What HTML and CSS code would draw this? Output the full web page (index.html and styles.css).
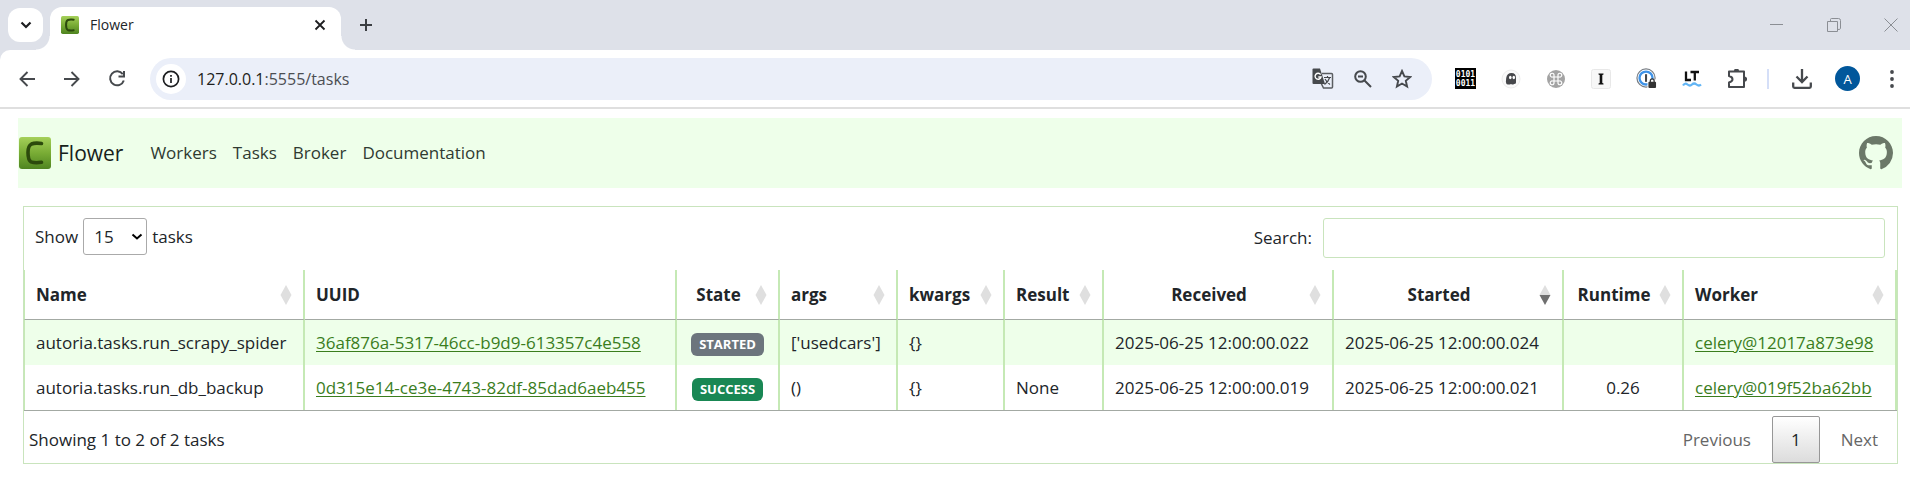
FILE: index.html
```html
<!DOCTYPE html>
<html lang="en">
<head>
<meta charset="utf-8">
<title>Flower</title>
<link rel="stylesheet" href="styles.css">
</head>
<body>
<svg class="defs" aria-hidden="true">
  <defs>
    <linearGradient id="leaf" x1="0" y1="0" x2="0" y2="1">
      <stop offset="0" stop-color="#a5d05a"/>
      <stop offset=".5" stop-color="#79ac35"/>
      <stop offset="1" stop-color="#4f8420"/>
    </linearGradient>
    <symbol id="celery" viewBox="0 0 32 32">
      <rect x="0" y="0" width="32" height="32" rx="3" fill="url(#leaf)"/>
      <path d="M22.500 6.500C19 6 15 6 12.500 7C9.500 8.500 9 11 9 15.500C9 20.500 9.500 23.500 12 24.800C15 26 19 25.800 22.500 25.300" fill="none" stroke="#2c4a0c" stroke-width="3.600" stroke-linecap="round"/>
    </symbol>
    <symbol id="sort" viewBox="0 0 12 20">
      <path class="up" d="M6 0L11.500 10H.5z"/>
      <path class="down" d="M.5 10H11.500L6 20z"/>
    </symbol>
  </defs>
</svg>

<header class="browser">
  <div class="tabstrip">
    <button class="tab-search" aria-label="Search tabs"><svg width="12" height="8" viewBox="0 0 12 8"><path d="M1.500 1.500L6 6L10.500 1.500" fill="none" stroke="#1d1e20" stroke-width="2.200"/></svg></button>
    <div class="tab">
      <svg class="favicon" width="18" height="18"><use href="#celery"/></svg>
      <span class="tab-title">Flower</span>
      <button class="plain" aria-label="Close tab"><svg width="12" height="12" viewBox="0 0 12 12"><path d="M1.500 1.500L10.500 10.500M10.500 1.500L1.500 10.500" stroke="#1d1e20" stroke-width="1.800"/></svg></button>
    </div>
    <button class="plain new-tab" aria-label="New tab"><svg width="14" height="14" viewBox="0 0 14 14"><path d="M7 1V13M1 7H13" stroke="#3c3f43" stroke-width="2"/></svg></button>
    <div class="window-controls">
      <button class="plain" aria-label="Minimize"><svg width="14" height="14" viewBox="0 0 14 14"><path d="M0 6.500H13" stroke="#8b8e94"/></svg></button>
      <button class="plain" aria-label="Restore"><svg width="14" height="14" viewBox="0 0 14 14"><path d="M.5 3.500H10.500V13.500H.5zM3.500 3V1.500Q3.500 .5 4.500 .5H11.500Q13.500 .5 13.500 2.500V10.500Q13.500 11.500 11 11.500" fill="none" stroke="#8b8e94"/></svg></button>
      <button class="plain" aria-label="Close"><svg width="14" height="14" viewBox="0 0 14 14"><path d="M.5 .5L13.500 13.500M13.500 .5L.5 13.500" stroke="#8b8e94"/></svg></button>
    </div>
  </div>

  <div class="toolbar">
    <div class="history">
      <button class="plain" aria-label="Back"><svg width="18" height="18" viewBox="0 0 18 18"><path d="M17 9H3M9.500 2L2.500 9L9.500 16" fill="none" stroke="#46494d" stroke-width="1.900"/></svg></button>
      <button class="plain" aria-label="Forward"><svg width="18" height="18" viewBox="0 0 18 18"><path d="M1 9H15M8.500 2L15.500 9L8.500 16" fill="none" stroke="#46494d" stroke-width="1.900"/></svg></button>
      <button class="plain" aria-label="Reload"><svg width="18" height="18" viewBox="0 0 18 18"><path d="M14.800 4.200A7 7 0 1 0 15.800 10.500M16 1V6.500H10.500" fill="none" stroke="#46494d" stroke-width="2"/></svg></button>
    </div>
    <div class="address">
      <span class="site-info"><svg width="18" height="18" viewBox="0 0 18 18"><circle cx="9" cy="9" r="7.600" fill="none" stroke="#1d1e20" stroke-width="1.700"/><path d="M9 8V13M9 5V6.700" stroke="#1d1e20" stroke-width="1.700"/></svg></span>
      <span class="url">127.0.0.1<span class="url-rest">:5555/tasks</span></span>
      <div class="address-actions">
        <button class="plain" aria-label="Translate"><svg width="22" height="22" viewBox="0 0 22 22"><path d="M10 5.500H19.500Q20.500 5.500 20.500 6.500V19Q20.500 20 19.500 20H11.500L9 15" fill="none" stroke="#5a5d61" stroke-width="1.500"/><path d="M1.500 .5H8L13 16H1.500Q.5 16 .5 15V1.500Q.5 .5 1.500 .5z" fill="#46494d"/><path d="M8.600 6.600A3 3 0 1 0 9 9H6.300" fill="none" stroke="#fff" stroke-width="1.400"/><path d="M12 9.500H19M15.500 8V9.500M17.700 9.500Q16.500 13.500 12.500 16.500M13 11Q15 14.500 18 16.500" fill="none" stroke="#46494d" stroke-width="1.200"/></svg></button>
        <button class="plain" aria-label="Zoom"><svg width="18" height="18" viewBox="0 0 18 18"><circle cx="6.500" cy="6.500" r="5.300" fill="none" stroke="#46494d" stroke-width="2"/><path d="M10.500 10.500L17 17M4 6.500H9" stroke="#46494d" stroke-width="2"/></svg></button>
        <button class="plain" aria-label="Bookmark"><svg width="20" height="20" viewBox="0 0 20 20"><path d="M10 2L12.400 7.400L18.200 8L13.800 11.800L15.100 17.500L10 14.500L4.900 17.500L6.200 11.800L1.800 8L7.600 7.400z" fill="none" stroke="#46494d" stroke-width="1.900"/></svg></button>
      </div>
    </div>
    <div class="extensions">
      <button class="plain binary"><span>0101</span><span>0011</span></button>
      <button class="plain" aria-label="Ghostery"><svg width="20" height="20" viewBox="0 0 20 20"><circle cx="10" cy="10" r="9" fill="#fafafa" stroke="#ececec"/><path d="M5.500 15Q4.500 13 5.200 9Q6 4 10.500 4Q15 4 15 9V13.500Q15 15 13 15Q12 16 10 15Q8 16 5.500 15z" fill="#46474b"/><ellipse cx="9.300" cy="8.500" rx="1.300" ry="1.800" fill="#fff"/><ellipse cx="12.800" cy="8.500" rx="1.300" ry="1.800" fill="#fff"/></svg></button>
      <button class="plain" aria-label="Shortcuts"><svg width="20" height="20" viewBox="0 0 20 20"><circle cx="10" cy="10" r="9" fill="#a3a3a3"/><path d="M8 8H12V12H8zM8 8H6.500A1.900 1.900 0 1 1 8 6.500zM12 8V6.500A1.900 1.900 0 1 1 13.500 8zM12 12H13.500A1.900 1.900 0 1 1 12 13.500zM8 12V13.500A1.900 1.900 0 1 1 6.500 12z" fill="none" stroke="#fff" stroke-width="1.200"/></svg></button>
      <button class="plain" aria-label="Instapaper"><svg width="20" height="20" viewBox="0 0 20 20"><rect x=".5" y=".5" width="19" height="19" rx="2" fill="#f7f7f7" stroke="#e8e8e8"/><path d="M7.500 4.500H12.500V5.500L11.300 6V14L12.500 14.500V15.500H7.500V14.500L8.700 14V6L7.500 5.500z" fill="#111"/></svg></button>
      <button class="plain" aria-label="Password manager"><svg width="21" height="21" viewBox="0 0 22 22"><circle cx="10.500" cy="10.500" r="9.500" fill="#fff" stroke="#7b8087" stroke-width="1.300"/><circle cx="10.500" cy="10.500" r="6.800" fill="none" stroke="#3f93e8" stroke-width="2.400"/><path d="M10.500 6.500V14.500" stroke="#45484c" stroke-width="2.200"/><rect x="12" y="12" width="10" height="10" fill="#fff"/><rect x="13" y="14.500" width="8" height="6.500" rx="1" fill="#333"/><path d="M15 15V13.500A2 2 0 0 1 19 13.500V15" fill="none" stroke="#333" stroke-width="1.300"/></svg></button>
      <button class="plain" aria-label="LanguageTool"><svg width="20" height="18" viewBox="0 0 20 18"><path d="M4 1.500V10H9M8.500 2H17M12.800 2V10.500" fill="none" stroke="#111" stroke-width="2.300"/><path d="M1 15.500Q3 12.500 5.500 14.500T10 14.500T14.500 14.500T19 14.500" fill="none" stroke="#62b5f5" stroke-width="2.200"/></svg></button>
      <button class="plain" aria-label="Extensions"><svg width="20" height="20" viewBox="1 1 20 20"><path d="M3 3.500H18V19H3V14.500Q6.500 13.500 6.500 11.200T3 8z" fill="none" stroke="#46494d" stroke-width="2" stroke-linejoin="round"/><path d="M8 3A2.500 2.500 0 0 1 13 3zM18.500 8.500A2.600 2.600 0 0 1 18.500 13.700z" fill="#46494d"/></svg></button>
    </div>
    <span class="divider"></span>
    <div class="profile">
      <button class="plain" aria-label="Downloads"><svg width="20" height="20" viewBox="0 0 20 20"><path d="M10 0V12M4.500 7.500L10 13L15.500 7.500M1.200 13.500V17.500Q1.200 18.800 2.500 18.800H17.500Q18.800 18.800 18.800 17.500V13.500" fill="none" stroke="#46494d" stroke-width="2.300"/></svg></button>
      <button class="plain avatar">A</button>
      <button class="plain menu" aria-label="Menu"><svg width="6" height="18" viewBox="0 0 6 18"><circle cx="3" cy="2" r="1.900" fill="#46494d"/><circle cx="3" cy="9" r="1.900" fill="#46494d"/><circle cx="3" cy="16" r="1.900" fill="#46494d"/></svg></button>
    </div>
  </div>
</header>

<nav class="navbar">
  <a class="brand" href="#"><svg width="32" height="32"><use href="#celery"/></svg>Flower</a>
  <a href="#">Workers</a>
  <a href="#">Tasks</a>
  <a href="#">Broker</a>
  <a href="#">Documentation</a>
  <a class="github" href="#" aria-label="GitHub"><svg width="34" height="34" viewBox="0 0 16 16"><path fill="#6b7868" d="M8 0C3.580 0 0 3.580 0 8c0 3.540 2.290 6.530 5.470 7.590.4.070.55-.17.55-.38 0-.19-.01-.82-.01-1.490-2.010.37-2.530-.49-2.690-.94-.09-.23-.48-.94-.82-1.130-.28-.15-.68-.52-.01-.53.63-.01 1.080.58 1.230.82.72 1.210 1.870.87 2.330.66.07-.52.28-.87.51-1.070-1.780-.2-3.640-.89-3.640-3.950 0-.87.31-1.590.82-2.150-.08-.2-.36-1.020.08-2.120 0 0 .67-.21 2.200.82.64-.18 1.320-.27 2-.27s1.360.09 2 .27c1.530-1.040 2.200-.82 2.200-.82.44 1.100.16 1.920.08 2.120.51.56.82 1.270.82 2.150 0 3.070-1.870 3.750-3.650 3.950.29.25.54.73.54 1.480 0 1.070-.01 1.930-.01 2.200 0 .21.15.46.55.38A8.010 8.010 0 0 0 16 8c0-4.420-3.580-8-8-8z"/></svg></a>
</nav>

<main class="panel">
  <div class="controls">
    <label class="length">Show
      <span class="select-box"><select><option>15</option></select><svg width="12" height="8" viewBox="0 0 12 8"><path d="M1.500 1.500L6 5.500L10.500 1.500" fill="none" stroke="#000" stroke-width="2"/></svg></span>
      tasks</label>
    <label class="search">Search: <input type="search"></label>
  </div>

  <table>
    <colgroup>
      <col class="c-name"><col class="c-uuid"><col class="c-state"><col class="c-args"><col class="c-kwargs"><col class="c-result"><col class="c-time"><col class="c-time"><col class="c-runtime"><col class="c-worker">
    </colgroup>
    <thead>
      <tr>
        <th><div class="head">Name<svg class="sort"><use href="#sort"/></svg></div></th>
        <th><div class="head">UUID</div></th>
        <th><div class="head center">State<svg class="sort"><use href="#sort"/></svg></div></th>
        <th><div class="head">args<svg class="sort"><use href="#sort"/></svg></div></th>
        <th><div class="head">kwargs<svg class="sort"><use href="#sort"/></svg></div></th>
        <th><div class="head">Result<svg class="sort"><use href="#sort"/></svg></div></th>
        <th><div class="head center">Received<svg class="sort"><use href="#sort"/></svg></div></th>
        <th><div class="head center">Started<svg class="sort descending"><use href="#sort"/></svg></div></th>
        <th><div class="head center">Runtime<svg class="sort"><use href="#sort"/></svg></div></th>
        <th><div class="head">Worker<svg class="sort"><use href="#sort"/></svg></div></th>
      </tr>
    </thead>
    <tbody>
      <tr>
        <td>autoria.tasks.run_scrapy_spider</td>
        <td><a href="#">36af876a-5317-46cc-b9d9-613357c4e558</a></td>
        <td class="center"><span class="badge started">STARTED</span></td>
        <td>['usedcars']</td>
        <td>{}</td>
        <td></td>
        <td>2025-06-25 12:00:00.022</td>
        <td>2025-06-25 12:00:00.024</td>
        <td class="center"></td>
        <td><a href="#">celery@12017a873e98</a></td>
      </tr>
      <tr>
        <td>autoria.tasks.run_db_backup</td>
        <td><a href="#">0d315e14-ce3e-4743-82df-85dad6aeb455</a></td>
        <td class="center"><span class="badge success">SUCCESS</span></td>
        <td>()</td>
        <td>{}</td>
        <td>None</td>
        <td>2025-06-25 12:00:00.019</td>
        <td>2025-06-25 12:00:00.021</td>
        <td class="center">0.26</td>
        <td><a href="#">celery@019f52ba62bb</a></td>
      </tr>
    </tbody>
  </table>

  <div class="footer">
    <span>Showing 1 to 2 of 2 tasks</span>
    <div class="pager">
      <button disabled>Previous</button>
      <button class="current">1</button>
      <button disabled>Next</button>
    </div>
  </div>
</main>
</body>
</html>
```
FILE: styles.css
```css
* { box-sizing: border-box; }

body {
  margin: 0;
  background: #fff;
  color: #212529;
  font: 17px/28px "Open Sans", "Noto Sans", sans-serif;
}

.defs { position: absolute; width: 0; height: 0; }
svg { display: block; flex: none; }
button, input, select { font: inherit; color: inherit; }

.plain {
  display: flex;
  align-items: center;
  justify-content: center;
  padding: 0;
  border: 0;
  background: none;
}

/* Browser frame */
.browser {
  border-bottom: 2px solid #dfdfdf;
  background: #dee1e9;
}

.tabstrip {
  display: flex;
  align-items: center;
  height: 50px;
  padding-left: 8px;
}

.tab-search {
  position: relative;
  z-index: 1;
  display: flex;
  align-items: center;
  justify-content: center;
  width: 35px;
  height: 34px;
  padding: 0;
  border: 0;
  border-radius: 12px;
  background: #fff;
}

.tab {
  position: relative;
  display: flex;
  align-items: center;
  align-self: flex-end;
  gap: 11px;
  width: 291px;
  height: 43px;
  margin-left: 7px;
  padding: 0 15px 7px 11px;
  border-radius: 12px 12px 0 0;
  background: #fff;
  font-size: 14px;
}

.tab::before, .tab::after {
  content: "";
  position: absolute;
  bottom: 0;
  width: 14px;
  height: 14px;
}
.tab::before { right: 100%; background: radial-gradient(circle at 0 0, #dee1e9 13px, #fff 14px); }
.tab::after { left: 100%; background: radial-gradient(circle at 100% 0, #dee1e9 13px, #fff 14px); }

.tab-title { flex: 1; }
.new-tab { margin-left: 18px; }

.window-controls {
  display: flex;
  gap: 43px;
  margin-left: auto;
  padding-right: 12px;
}

.toolbar {
  display: flex;
  align-items: center;
  height: 57px;
  padding: 0 15px 0 18px;
  border-top-left-radius: 10px;
  background: #fff;
}

.history { display: flex; gap: 27px; }

.address {
  display: flex;
  flex: 1;
  align-items: center;
  height: 42px;
  margin-left: 24px;
  padding: 0 20px 0 6px;
  border-radius: 21px;
  background: #ebeff9;
}

.site-info {
  display: grid;
  place-items: center;
  width: 30px;
  height: 30px;
  border-radius: 50%;
  background: #fff;
}

.url { margin-left: 11px; font-size: 16px; color: #1d1e20; }
.url-rest { color: #4b4e53; }

.address-actions {
  display: flex;
  align-items: center;
  gap: 20px;
  margin-left: auto;
}

.extensions {
  display: flex;
  align-items: center;
  gap: 25px;
  margin-left: 23px;
}

.binary {
  flex-direction: column;
  width: 21px;
  height: 21px;
  background: #000;
  color: #fff;
  font: bold 8px/9px "DejaVu Sans Mono", monospace;
}

.divider {
  width: 2px;
  height: 20px;
  margin: 0 23px 0 20px;
  background: #d5dff8;
}

.profile { display: flex; align-items: center; gap: 23px; }
.menu { margin-left: 6px; }

.avatar {
  width: 25px;
  height: 25px;
  border-radius: 50%;
  background: #01579b;
  color: #fff;
  font-size: 13px;
}

/* Site navigation */
.navbar {
  display: flex;
  align-items: center;
  gap: 16px;
  height: 70px;
  margin: 9px 8px 18px 18px;
  padding: 0 9px 0 1px;
  background: #eeffea;
}

.navbar a { color: #2f3a31; text-decoration: none; }

.navbar .brand {
  display: flex;
  align-items: center;
  gap: 7px;
  margin-right: 11px;
  color: #16211a;
  font-size: 21px;
}

.navbar .github { margin-left: auto; }

/* Task table */
.panel {
  margin: 0 12px 20px 23px;
  border: 1px solid #c9e4bd;
}

.controls {
  display: flex;
  align-items: flex-start;
  justify-content: space-between;
  padding: 11px 12px 12px 11px;
}

.length, .search { display: flex; align-items: center; }
.length { gap: 5px; }
.search { gap: 11px; }

.select-box { position: relative; }
.select-box svg { position: absolute; top: 15px; right: 4px; pointer-events: none; }

.select-box select {
  appearance: none;
  width: 64px;
  height: 37px;
  padding: 0 10px;
  border: 1px solid #aaa;
  border-radius: 3px;
  background: #fff;
}

.search input {
  width: 562px;
  height: 40px;
  padding: 5px;
  border: 1px solid #c9e4bd;
  border-radius: 3px;
  background: #fff;
}

table {
  width: 100%;
  table-layout: fixed;
  border-collapse: separate;
  border-spacing: 0;
  border-bottom: 1px solid #a3a9a3;
}

.c-name { width: 281px; }
.c-uuid { width: 372px; }
.c-state { width: 103px; }
.c-args { width: 118px; }
.c-kwargs { width: 107px; }
.c-result { width: 99px; }
.c-time { width: 230px; }
.c-runtime { width: 120px; }
.c-worker { width: 213px; }

th, td {
  border-right: 2px solid #c5e9b5;
  text-align: left;
  white-space: nowrap;
}
th:first-child, td:first-child { border-left: 1px solid #c5e9b5; }

th { height: 50px; padding: 0; border-bottom: 1px solid #a3a9a3; }
td { height: 45px; padding: 0 11px; }

.head {
  display: flex;
  align-items: center;
  justify-content: space-between;
  padding: 0 11px;
}

.head.center {
  display: grid;
  grid-template-columns: 1fr auto;
  column-gap: 6px;
  justify-items: center;
}

.sort {
  --down: #dfdfdf;
  width: 12px;
  height: 20px;
  fill: #dfdfdf;
}
.descending { --down: #6f6f6f; }
.down { fill: var(--down); }

tbody tr:nth-child(odd) { background: #eeffea; }
td.center { padding-left: 0; padding-right: 0; text-align: center; }
td a { color: #3a7d1d; text-underline-offset: 2px; }

.badge {
  display: inline-block;
  padding: 0 8px;
  border-radius: 6px;
  color: #fff;
  font-size: 13px;
  font-weight: 700;
  line-height: 23px;
}
.started { background: #6c757d; }
.success { background: #198754; }

.footer {
  display: flex;
  align-items: center;
  justify-content: space-between;
  padding: 5px 0 0 5px;
}

.pager { display: flex; gap: 2px; }

.pager button {
  height: 47px;
  padding: 0 18px;
  border: 1px solid transparent;
  border-radius: 2px;
  background: none;
  color: #666;
}

.pager .current {
  border-color: #979797;
  background: linear-gradient(#fff, #dcdcdc);
  color: #212529;
}
```
